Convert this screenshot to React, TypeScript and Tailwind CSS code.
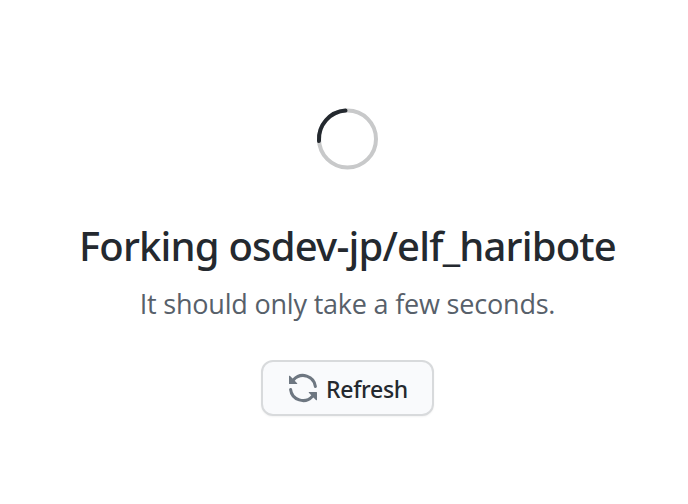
export default function App() {
  return (
    <main className="flex h-[504px] w-[688px] flex-col items-center overflow-hidden bg-white pl-[7px] font-['Noto_Sans',sans-serif] text-[#24292f]">
      <svg className="mt-[107px] size-16 shrink-0 -translate-x-[0.5px]" viewBox="0 0 64 64" fill="none" strokeWidth="4">
        <circle cx="32" cy="32" r="28.5" stroke="#c8c9ca" />
        <path d="M3.5 34A28.5 28.5 0 0 1 30 3.6" stroke="#24292f" strokeLinecap="round" />
      </svg>
      <h1 className="mt-[51px] flex h-12 items-center justify-center whitespace-nowrap text-[40px] font-medium leading-[48px] tracking-[-0.8px]">
        Forking osdev-jp/elf_haribote
      </h1>
      <p className="mt-4 h-9 whitespace-nowrap font-['Open_Sans','Noto_Sans',sans-serif] text-[27px] leading-9 tracking-[-0.2px] text-[#57606a]">It should only take a few seconds.</p>
      <button className="mt-[38px] flex h-14 w-[173px] items-center justify-center gap-[7px] rounded-xl border-2 border-[#d8dadc] bg-[#f9fafc] text-[23px] font-medium tracking-[-0.3px] shadow-xs">
        <svg className="size-8 shrink-0" viewBox="0 0 16 16" fill="#6e7781">
          <path d="M1.705 8.005a.75.75 0 0 1 .834.656 5.5 5.5 0 0 0 9.592 2.97l-1.204-1.204a.25.25 0 0 1 .177-.427h3.646a.25.25 0 0 1 .25.25v3.646a.25.25 0 0 1-.427.177l-1.38-1.38A7.002 7.002 0 0 1 1.05 8.84a.75.75 0 0 1 .656-.834ZM8 2.5a5.487 5.487 0 0 0-4.131 1.869l1.204 1.204A.25.25 0 0 1 4.896 6H1.25A.25.25 0 0 1 1 5.75V2.104a.25.25 0 0 1 .427-.177l1.38 1.38A7.002 7.002 0 0 1 14.95 7.16a.75.75 0 0 1-1.49.178A5.5 5.5 0 0 0 8 2.5Z" />
        </svg>
        <span className="translate-y-px">Refresh</span>
      </button>
    </main>
  );
}
